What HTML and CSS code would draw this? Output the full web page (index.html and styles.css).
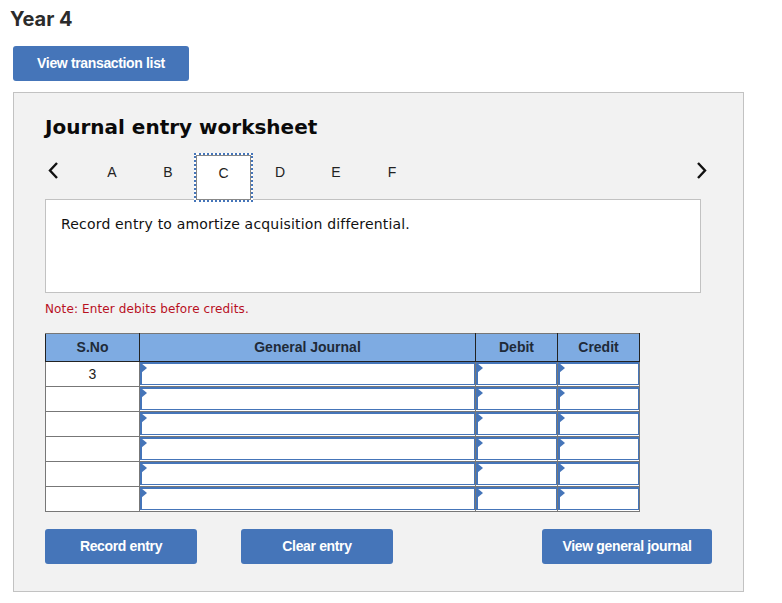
FILE: index.html
```html
<!DOCTYPE html>
<html lang="en">
<head>
<meta charset="utf-8">
<title>Journal entry worksheet</title>
<link rel="stylesheet" href="styles.css">
</head>
<body>
<h2 class="year">Year 4</h2>
<button class="btn btn-top">View transaction list</button>
<section class="panel">
  <h1 class="title">Journal entry worksheet</h1>
  <nav class="tabs">
    <svg class="chev" width="12" height="20" viewBox="0 0 12 20"><path d="M10 2 L3 9.5 L10 17" fill="none" stroke="#111" stroke-width="2.4"/></svg>
    <div class="tablist">
      <span class="tab">A</span>
      <span class="tab">B</span>
      <span class="tab active">C</span>
      <span class="tab">D</span>
      <span class="tab">E</span>
      <span class="tab">F</span>
    </div>
    <svg class="chev chev-right" width="12" height="20" viewBox="0 0 12 20"><path d="M2 2 L9 9.5 L2 17" fill="none" stroke="#111" stroke-width="2.4"/></svg>
  </nav>
  <div class="prompt">Record entry to amortize acquisition differential.</div>
  <p class="note">Note: Enter debits before credits.</p>
  <table class="journal">
    <thead>
      <tr><th class="c-no">S.No</th><th class="c-gj">General Journal</th><th class="c-d">Debit</th><th class="c-c">Credit</th></tr>
    </thead>
    <tbody>
      <tr><td class="no">3</td><td class="in"><div class="field"></div></td><td class="in"><div class="field"></div></td><td class="in"><div class="field"></div></td></tr>
      <tr><td class="no"></td><td class="in"><div class="field"></div></td><td class="in"><div class="field"></div></td><td class="in"><div class="field"></div></td></tr>
      <tr><td class="no"></td><td class="in"><div class="field"></div></td><td class="in"><div class="field"></div></td><td class="in"><div class="field"></div></td></tr>
      <tr><td class="no"></td><td class="in"><div class="field"></div></td><td class="in"><div class="field"></div></td><td class="in"><div class="field"></div></td></tr>
      <tr><td class="no"></td><td class="in"><div class="field"></div></td><td class="in"><div class="field"></div></td><td class="in"><div class="field"></div></td></tr>
      <tr><td class="no"></td><td class="in"><div class="field"></div></td><td class="in"><div class="field"></div></td><td class="in"><div class="field"></div></td></tr>
    </tbody>
  </table>
  <div class="actions">
    <button class="btn btn-a">Record entry</button>
    <button class="btn btn-a btn-clear">Clear entry</button>
    <button class="btn btn-view">View general journal</button>
  </div>
</section>
</body>
</html>
```
FILE: styles.css
```css
* { box-sizing: border-box; }
body { margin: 0; background: #fff; font-family: "Liberation Sans", Arial, sans-serif; color: #222; }
.year { margin: 0; padding: 7px 0 0 10px; height: 46px; font: 700 20px/24px Inter, "Liberation Sans", sans-serif; color: #2b2b2b; }
.btn { display: block; border: 0; border-radius: 3px; background: #4575b9; color: #fff; font: 700 14px/17px "Liberation Sans", Arial, sans-serif; letter-spacing: -0.35px; padding: 0; height: 35px; text-align: center; }
.btn-top { margin-left: 13px; width: 176px; }
.panel { margin: 11px 0 0 13px; width: 731px; height: 500px; background: #f2f2f2; border: 1px solid #c2c2c2; padding: 0 0 0 31px; }
.title { margin: 0; padding-top: 20px; height: 60px; font: 700 20px/28px "DejaVu Sans", Verdana, sans-serif; color: #0a0a0a; }
.tabs { display: flex; align-items: flex-start; height: 46px; }
.chev { margin: 8px 0 0 2px; flex: none; }
.chev-right { margin-left: auto; margin-right: 35px; }
.tablist { display: flex; margin-left: 25px; }
.tab { width: 56px; height: 49px; padding-bottom: 10px; display: flex; align-items: center; justify-content: center; font: 14px/17px "Liberation Sans", Arial, sans-serif; color: #222; }
.active { background: #fff; border: 2px dotted #4575b9; outline: 1px solid #888; outline-offset: -3px; width: 59px; margin-left: -2px; margin-right: -1px; padding-bottom: 8px; }
.prompt { width: 656px; height: 94px; background: #fff; border: 1px solid #c2c2c2; padding: 14px 15px; font: 14px/20px "DejaVu Sans", Verdana, sans-serif; letter-spacing: 0.18px; color: #111; }
.note { margin: 0; padding-top: 8px; height: 40px; font: 12px/16px "DejaVu Sans", Verdana, sans-serif; letter-spacing: 0.12px; color: #b8101f; }
.journal { border-collapse: collapse; table-layout: fixed; width: 594px; background: #fff; border: 1px solid #777; }
.c-no { width: 94px; }
.c-gj { width: 336px; }
.c-d { width: 82px; }
.c-c { width: 82px; }
th { height: 28px; padding: 0; background: #7eabe2; border: 1px solid #222; border-top-color: #777; font: 700 14px/17px "Liberation Sans", Arial, sans-serif; color: #1f2a38; }
td { height: 25px; padding: 0; border: 1px solid #777; }
.no { text-align: center; font: 14px/17px "Liberation Sans", Arial, sans-serif; color: #222; }
.in { padding: 0 0 1px; vertical-align: top; }
.field { position: relative; height: 23px; border: solid #4575b9; border-width: 2px 1px 1px 2px; background: #fff; }
.field::before { content: ""; position: absolute; left: -1px; top: -1px; border-left: 6px solid #4575b9; border-top: 5px solid transparent; border-bottom: 5px solid transparent; }
.actions { display: flex; margin-top: 17px; width: 667px; }
.btn-a { width: 152px; }
.btn-clear { margin-left: 44px; }
.btn-view { width: 170px; margin-left: auto; }
```
